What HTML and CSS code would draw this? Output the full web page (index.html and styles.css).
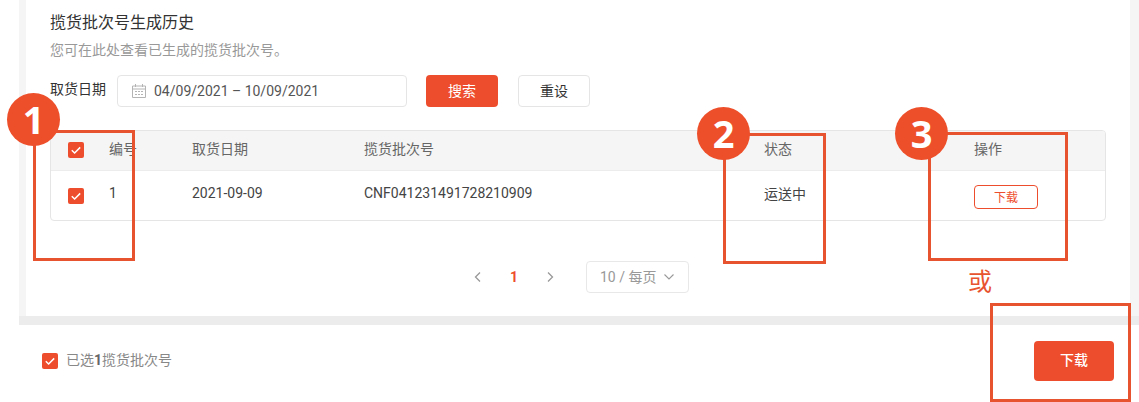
FILE: index.html
```html
<!DOCTYPE html>
<html lang="zh">
<head>
<meta charset="utf-8">
<title>揽货批次号生成历史</title>
<link rel="stylesheet" href="styles.css">
</head>
<body>
<main class="page">
  <section class="card">
    <h1 class="title">揽货批次号生成历史</h1>
    <p class="sub">您可在此处查看已生成的揽货批次号。</p>
    <div class="filter">
      <span class="filter-label">取货日期</span>
      <div class="date">
        <svg class="cal" width="16" height="16" viewBox="0 0 16 16" fill="none" stroke="#b4b4b4" stroke-width="1"><path d="M1.500 3h13v11.500h-13zM1.500 6h13M4.500 1v3M11.500 1v3"/><path d="M4 8.500h2M7 8.500h2M10 8.500h2M4 11.500h2M7 11.500h2M10 11.500h2"/></svg>
        <span>04/09/2021 – 10/09/2021</span>
      </div>
      <button class="btn primary">搜索</button>
      <button class="btn plain">重设</button>
    </div>
    <div class="table">
      <div class="tr head">
        <div class="c-check"><span class="check"><svg width="16" height="16" viewBox="0 0 16 16" fill="none" stroke="#fff" stroke-width="1.500"><path d="M3.800 8.300l2.800 2.700 5.600-5.600"/></svg></span></div>
        <div class="c-no">编号</div>
        <div class="c-date">取货日期</div>
        <div class="c-batch">揽货批次号</div>
        <div class="c-status">状态</div>
        <div class="c-act">操作</div>
      </div>
      <div class="tr body">
        <div class="c-check"><span class="check"><svg width="16" height="16" viewBox="0 0 16 16" fill="none" stroke="#fff" stroke-width="1.500"><path d="M3.800 8.300l2.800 2.700 5.600-5.600"/></svg></span></div>
        <div class="c-no">1</div>
        <div class="c-date">2021-09-09</div>
        <div class="c-batch">CNF041231491728210909</div>
        <div class="c-status">运送中</div>
        <div class="c-act"><button class="dl-small">下载</button></div>
      </div>
    </div>
    <div class="pager">
      <svg class="arrow" width="12" height="12" viewBox="0 0 12 12" fill="none" stroke="#999" stroke-width="1.300"><path d="M8 1.500L3.500 6 8 10.500"/></svg>
      <span class="cur">1</span>
      <svg class="arrow" width="12" height="12" viewBox="0 0 12 12" fill="none" stroke="#999" stroke-width="1.300"><path d="M4 1.500L8.500 6 4 10.500"/></svg>
      <div class="size">
        <span class="size-text">10 / 每页</span>
        <svg width="10" height="6" viewBox="0 0 10 6" fill="none" stroke="#999" stroke-width="1.100"><path d="M.5 .5L5 5l4.500-4.500"/></svg>
      </div>
    </div>
  </section>
</main>
<footer class="foot">
  <label class="selected">
    <span class="check"><svg width="16" height="16" viewBox="0 0 16 16" fill="none" stroke="#fff" stroke-width="1.500"><path d="M3.800 8.300l2.800 2.700 5.600-5.600"/></svg></span>
    <span class="selected-text">已选<b>1</b>揽货批次号</span>
  </label>
  <button class="dl-big">下载</button>
</footer>

<div class="mark box-1"></div>
<div class="mark box-2"></div>
<div class="mark box-3"></div>
<div class="mark box-4"></div>
<div class="badge badge-1">1</div>
<div class="badge badge-2">2</div>
<div class="badge badge-3">3</div>
<div class="or">或</div>
</body>
</html>
```
FILE: styles.css
```css
* { box-sizing: border-box; }
html, body { margin: 0; padding: 0; }
body {
  position: relative;
  width: 1139px;
  height: 402px;
  overflow: hidden;
  background: #fff;
  color: #333;
  font-family: Roboto, "Noto Sans CJK SC", sans-serif;
  font-size: 14px;
}
button { font-family: inherit; cursor: pointer; }

.page {
  margin-left: 19px;
  padding: 0 9px 0 7px;
  background: #f5f5f5;
  height: 325px;
  border-bottom: 9px solid #ececec;
}
.card {
  height: 316px;
  background: #fff;
  padding: 12px 24px 0 24px;
}
.title {
  margin: 0;
  font-size: 16px;
  font-weight: 400;
  line-height: 22px;
  color: #333;
}
.sub {
  margin: 6px 0 0;
  font-size: 14px;
  line-height: 20px;
  color: #999;
}
.filter {
  display: flex;
  align-items: center;
  margin-top: 15px;
  height: 32px;
}
.filter-label { width: 67px; color: #333; line-height: 26px; height: 30px; }
.date {
  display: flex;
  align-items: center;
  gap: 7px;
  width: 290px;
  height: 32px;
  padding-left: 13px;
  border: 1px solid #e5e5e5;
  border-radius: 4px;
  color: #555;
}
.btn {
  width: 72px;
  height: 32px;
  padding: 0 0 3px;
  border-radius: 4px;
  font-size: 14px;
}
.primary { margin-left: 19px; background: #ee4d2d; border: 0; color: #fff; }
.plain { margin-left: 20px; background: #fff; border: 1px solid #e5e5e5; color: #333; }

.table {
  margin-top: 23px;
  border: 1px solid #e5e5e5;
  border-radius: 4px;
  overflow: hidden;
}
.tr { display: flex; align-items: center; font-size: 14px; }
.head { height: 39px; background: #f5f5f5; color: #666; }
.body { height: 50px; border-top: 1px solid #ececec; color: #444; }
.c-check { width: 58px; padding-left: 17px; display: flex; }
.head .c-check { padding-bottom: 1px; }
.body .c-check { padding-top: 1px; }
.c-no { width: 83px; }
.c-date { width: 172px; }
.c-batch { width: 400px; }
.c-status { width: 210px; }
.c-act { flex: 1; }
.head .c-no, .head .c-date, .head .c-batch, .head .c-status, .head .c-act { padding-bottom: 6px; }
.body .c-no, .body .c-date, .body .c-batch, .body .c-status { padding-bottom: 6px; }

.check {
  display: block;
  flex: none;
  width: 16px;
  height: 16px;
  background: #ee4d2d;
  border-radius: 2px;
}
.check svg { display: block; }

.dl-small {
  display: block;
  width: 64px;
  height: 24px;
  margin-top: 3px;
  padding: 0 0 2px;
  background: #fff;
  border: 1px solid #ee4d2d;
  border-radius: 4px;
  color: #ee4d2d;
  font-size: 12px;
}

.pager {
  display: flex;
  align-items: center;
  margin-top: 40px;
  margin-left: 422px;
  height: 32px;
}
.arrow { display: block; }
.cur { width: 60px; text-align: center; color: #ee4d2d; font-weight: 700; font-size: 14px; }
.size {
  display: flex;
  align-items: center;
  gap: 8px;
  width: 103px;
  height: 32px;
  margin-left: 30px;
  padding-left: 13px;
  border: 1px solid #e8e8e8;
  border-radius: 4px;
  color: #999;
}
.size-text { position: relative; top: -1px; }

.foot {
  display: flex;
  align-items: center;
  justify-content: space-between;
  height: 77px;
  padding: 0 25px 5px 42px;
  background: #fff;
}
.selected { display: flex; align-items: center; gap: 8px; font-size: 14px; color: #888; }
.selected-text { position: relative; top: -2px; }
.selected b { color: #666; }
.dl-big {
  width: 80px;
  height: 40px;
  padding: 0 0 5px;
  background: #ee4d2d;
  border: 0;
  border-radius: 4px;
  color: #fff;
  font-size: 14px;
  font-weight: 500;
}

.mark { position: absolute; border: 3px solid #e8532f; }
.box-1 { left: 33px; top: 130px; width: 102px; height: 131px; }
.box-2 { left: 723px; top: 133px; width: 103px; height: 131px; }
.box-3 { left: 928px; top: 132px; width: 140px; height: 129px; }
.box-4 { left: 990px; top: 303px; width: 141px; height: 99px; }
.badge {
  position: absolute;
  width: 53px;
  height: 53px;
  border-radius: 50%;
  background: #ee4f2b;
  color: #fff;
  font-family: "Open Sans", "Noto Sans", sans-serif;
  font-size: 38px;
  font-weight: 700;
  line-height: 53px;
  text-align: center;
}
.badge-1 { left: 7px; top: 93px; }
.badge-2 { left: 697px; top: 107px; }
.badge-3 { left: 895px; top: 107px; }
.or {
  position: absolute;
  left: 968px;
  top: 265px;
  color: #e8532f;
  font-size: 24px;
  line-height: 34px;
}
```
